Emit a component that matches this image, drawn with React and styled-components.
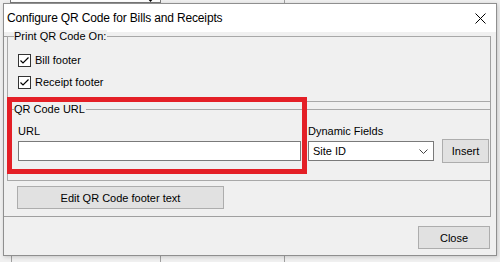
import React from "react";
import styled, { createGlobalStyle } from "styled-components";

const GlobalStyle = createGlobalStyle`
  html, body { margin: 0; padding: 0; background: #f0f0f0; }
  body { font-family: "Liberation Sans", Arial, sans-serif; font-size: 11px; color: #000; }
`;

const Page = styled.div`
  position: relative;
  width: 500px;
  height: 262px;
  overflow: hidden;
  background: #f0f0f0;
`;

/* ---------- background application (behind the dialog) ---------- */
const Backdrop = styled.div`
  display: flex;
  flex-direction: column;
  height: 262px;
`;

const BackTopRow = styled.div`
  display: flex;
  margin-top: -16px;
  height: 19px;
`;

const BackCombo = styled.div`
  margin-left: 10px;
  width: 151px;
  height: 19px;
  box-sizing: border-box;
  border: 1px solid #7a7a7a;
  background: #fff;
  display: flex;
  align-items: flex-end;
  justify-content: space-between;
  padding: 0 6px 0 3px;
  line-height: 16px;
`;

const BackCell = styled.div`
  width: ${(p) => p.$w}px;
  box-sizing: border-box;
  border-right: 1px solid #a0a0a0;
  height: 100%;
`;

const BackBottomRow = styled.div`
  margin-top: auto;
  display: flex;
  height: 7px;
`;

/* ---------- dialog window ---------- */
const Dialog = styled.div`
  position: absolute;
  left: 3px;
  top: 3px;
  width: 494px;
  height: 253px;
  box-sizing: border-box;
  border: 1px solid #8f8f8f;
  background: #f0f0f0;
  display: flex;
  flex-direction: column;
  box-shadow: 1px 1px 4px rgba(0, 0, 0, 0.18);
`;

const TitleBar = styled.div`
  height: 28px;
  background: #fff;
  display: flex;
  align-items: center;
  justify-content: space-between;
  padding-left: 3px;
  padding-right: 10px;
  flex-shrink: 0;
`;

const TitleText = styled.span`
  font-size: 12px;
  letter-spacing: -0.15px;
  padding-bottom: 1px;
`;

const Client = styled.div`
  flex: 1;
  display: flex;
  flex-direction: column;
  padding-top: 4px;
`;

const Panel = styled.div`
  height: 181px;
  box-sizing: border-box;
  margin-right: 5px;
  border: 1px solid #a0a0a0;
  border-left: none;
  display: flex;
  flex-direction: column;
`;

const Group = styled.div`
  position: relative;
  box-sizing: border-box;
  height: ${(p) => p.$h}px;
  margin-left: 3px;
  margin-top: ${(p) => p.$mt}px;
  border: 1px solid #a8a8a8;
  border-right: none;
  display: flex;
  flex-direction: column;
  padding: ${(p) => p.$pad};
`;

const Legend = styled.span`
  position: absolute;
  left: 6px;
  top: -7px;
  line-height: 13px;
  padding: 0 1px 0 0;
  background: #f0f0f0;
`;

const CheckRow = styled.label`
  display: flex;
  align-items: center;
  gap: 4px;
  height: 13px;
  line-height: 13px;
`;

const CheckList = styled.div`
  display: flex;
  flex-direction: column;
  gap: 9px;
`;

const CheckBox = styled.span`
  width: 13px;
  height: 13px;
  box-sizing: border-box;
  border: 1px solid #333;
  background: #fff;
  display: flex;
  align-items: center;
  justify-content: center;
`;

const FieldRow = styled.div`
  display: flex;
  align-items: flex-end;
`;

const Field = styled.div`
  display: flex;
  flex-direction: column;
  gap: 3px;
  width: ${(p) => p.$w}px;
  margin-right: ${(p) => p.$mr}px;
`;

const FieldLabel = styled.span`
  line-height: 13px;
  height: 13px;
`;

const TextInput = styled.div`
  height: 20px;
  box-sizing: border-box;
  border: 1px solid #7a7a7a;
  background: #fff;
`;

const Select = styled.div`
  height: 20px;
  box-sizing: border-box;
  border: 1px solid #7a7a7a;
  background: #fff;
  display: flex;
  align-items: center;
  justify-content: space-between;
  padding: 0 5px 0 4px;
`;

const Button = styled.div`
  box-sizing: border-box;
  width: ${(p) => p.$w}px;
  height: ${(p) => p.$h}px;
  border: 1px solid #adadad;
  background: #e1e1e1;
  display: flex;
  align-items: center;
  justify-content: center;
  margin: ${(p) => p.$m || "0"};
  flex-shrink: 0;
`;

const Footer = styled.div`
  flex: 1;
  display: flex;
  justify-content: flex-end;
  align-items: flex-start;
  padding: 9px 6px 0 0;
`;

const Highlight = styled.div`
  position: absolute;
  left: 7px;
  top: 97px;
  width: 300px;
  height: 77px;
  box-sizing: border-box;
  border: 5px solid #e41f26;
  pointer-events: none;
`;

const Check = () => (
  <svg width="11" height="11" viewBox="0 0 11 11">
    <polyline points="1.5,5.5 4,8 9.5,2.5" fill="none" stroke="#000" strokeWidth="1.2" />
  </svg>
);

const CloseX = () => (
  <svg width="11" height="11" viewBox="0 0 11 11">
    <line x1="0.5" y1="0.5" x2="10.5" y2="10.5" stroke="#000" strokeWidth="1" />
    <line x1="10.5" y1="0.5" x2="0.5" y2="10.5" stroke="#000" strokeWidth="1" />
  </svg>
);

const Chevron = () => (
  <svg width="9" height="5" viewBox="0 0 9 5">
    <polyline points="0.5,0.5 4.5,4.5 8.5,0.5" fill="none" stroke="#444" strokeWidth="1" />
  </svg>
);

const SmallArrow = () => (
  <svg width="7" height="4" viewBox="0 0 7 4">
    <polygon points="0,0 7,0 3.5,4" fill="#000" />
  </svg>
);

export default function App() {
  return (
    <>
      <GlobalStyle />
      <Page>
        <Backdrop>
          <BackTopRow>
            <BackCombo>
              <span>No Printing</span>
              <SmallArrow />
            </BackCombo>
            <BackCell $w={124} />
          </BackTopRow>
          <BackBottomRow>
            <BackCell $w={12} />
            <BackCell $w={149} />
            <BackCell $w={124} />
          </BackBottomRow>
        </Backdrop>

        <Dialog>
          <TitleBar>
            <TitleText>Configure QR Code for Bills and Receipts</TitleText>
            <CloseX />
          </TitleBar>
          <Client>
            <Panel>
              <Group $h={66} $mt={-1} $pad="17px 0 0 10px">
                <Legend>Print QR Code On:</Legend>
                <CheckList>
                  <CheckRow>
                    <CheckBox><Check /></CheckBox>
                    Bill footer
                  </CheckRow>
                  <CheckRow>
                    <CheckBox><Check /></CheckBox>
                    Receipt footer
                  </CheckRow>
                </CheckList>
              </Group>
              <Group $h={72} $mt={7} $pad="15px 0 0 10px">
                <Legend>QR Code URL</Legend>
                <FieldRow>
                  <Field $w={283} $mr={7}>
                    <FieldLabel>URL</FieldLabel>
                    <TextInput />
                  </Field>
                  <Field $w={126} $mr={8}>
                    <FieldLabel>Dynamic Fields</FieldLabel>
                    <Select>
                      <span>Site ID</span>
                      <Chevron />
                    </Select>
                  </Field>
                  <Button $w={47} $h={24} $m="0 0 -2px 0">Insert</Button>
                </FieldRow>
              </Group>
              <Button $w={207} $h={23} $m="5px 0 0 13px">Edit QR Code footer text</Button>
            </Panel>
            <Footer>
              <Button $w={72} $h={23}>Close</Button>
            </Footer>
          </Client>
        </Dialog>
        <Highlight />
      </Page>
    </>
  );
}
